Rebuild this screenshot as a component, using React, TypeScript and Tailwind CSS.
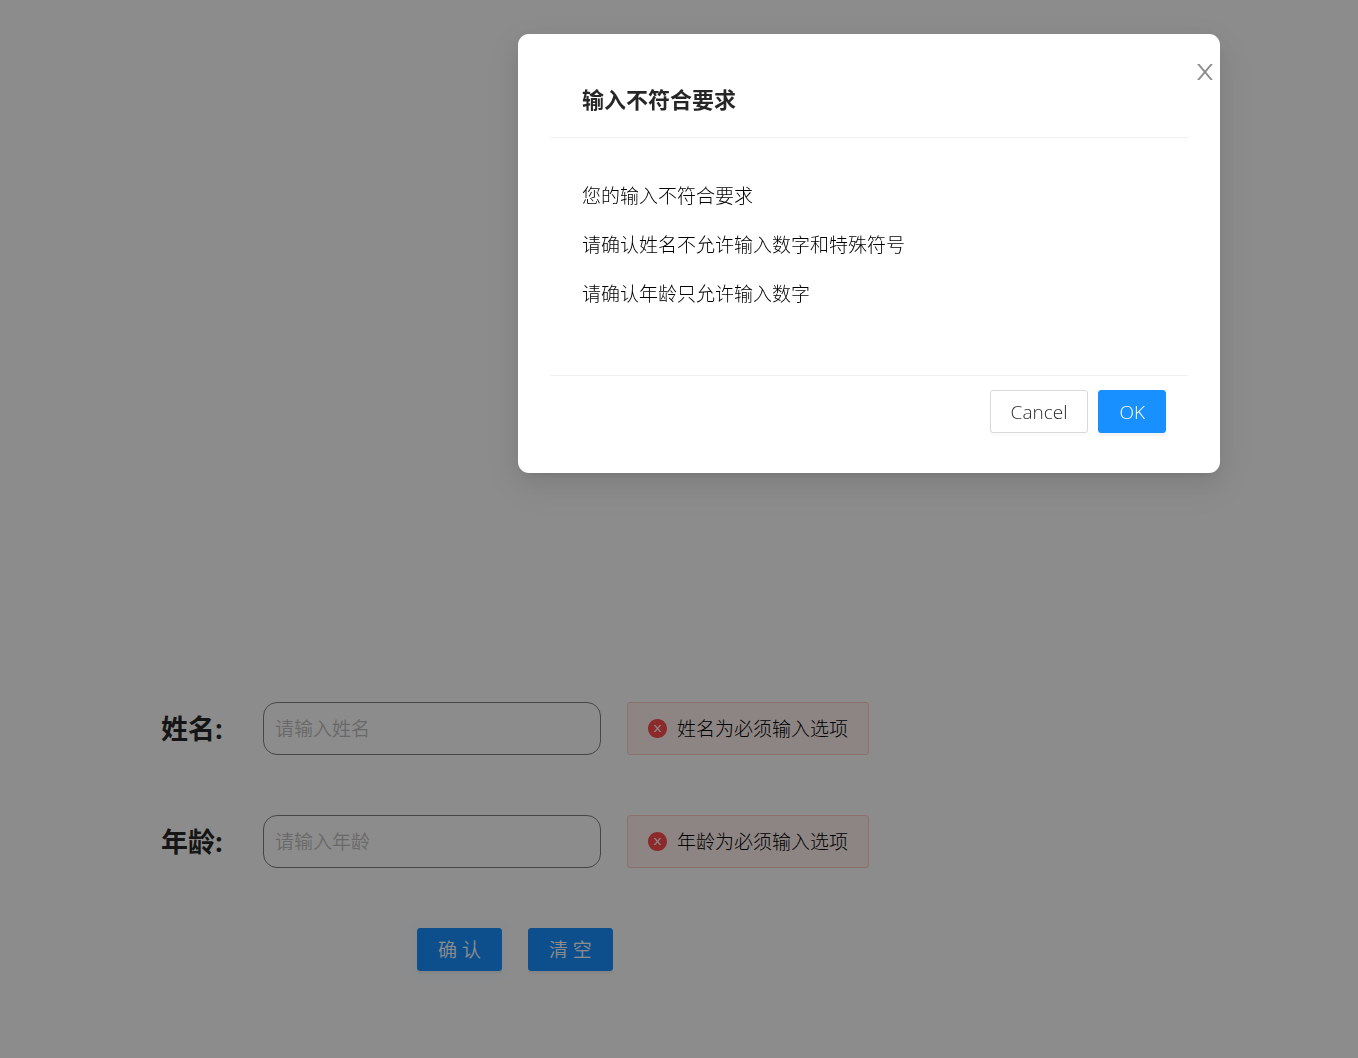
import React from "react";

function CloseIcon() {
  return (
    <svg viewBox="64 64 896 896" className="size-[22px]" fill="currentColor" aria-hidden="true">
      <path d="M563.8 512l262.5-312.9c4.4-5.2.7-13.1-6.1-13.1h-79.8c-4.7 0-9.2 2.1-12.3 5.7L511.6 449.8 295.1 191.7c-3-3.6-7.5-5.7-12.3-5.7H203c-6.8 0-10.5 7.9-6.1 13.1L459.4 512 196.9 824.9A7.95 7.95 0 0 0 203 838h79.8c4.7 0 9.2-2.1 12.3-5.7l216.5-258.1 216.5 258.1c3 3.6 7.5 5.7 12.3 5.7h79.8c6.8 0 10.5-7.9 6.1-13.1L563.8 512z" />
    </svg>
  );
}

function ErrorIcon() {
  return (
    <svg viewBox="64 64 896 896" className="size-[19px] shrink-0 text-[#ff4d4f]" fill="currentColor" aria-hidden="true">
      <path d="M512 64C264.6 64 64 264.6 64 512s200.6 448 448 448 448-200.6 448-448S759.4 64 512 64zm165.4 618.2l-66-.3L512 563.4l-99.3 118.4-66.1.3c-4.4 0-8-3.5-8-8 0-1.9.7-3.7 1.9-5.2l130.1-155L340.5 359a8.32 8.32 0 0 1-1.9-5.2c0-4.4 3.6-8 8-8l66.1.3L512 464.6l99.3-118.4 66-.3c4.4 0 8 3.5 8 8 0 1.9-.7 3.7-1.9 5.2L553.5 514l130 155c1.2 1.5 1.9 3.3 1.9 5.2 0 4.4-3.6 8-8 8z" />
    </svg>
  );
}

interface FieldProps {
  id: string;
  label: string;
  placeholder: string;
  error: string;
}

function Field({ id, label, placeholder, error }: FieldProps) {
  return (
    <div className="flex items-center">
      <label htmlFor={id} className="w-[102px] text-[27px] leading-10 font-bold">
        {label}:
      </label>
      <input
        id={id}
        type="text"
        placeholder={placeholder}
        className="h-[53px] w-[338px] rounded-[14px] border border-[#808080] bg-white px-[11px] placeholder:text-[#bfbfbf]"
      />
      <div role="alert" className="ml-[26px] flex h-[53px] items-center gap-[10px] rounded-[3px] border border-[#ffccc7] bg-[#fff2f0] px-5">
        <ErrorIcon />
        <span className="font-light whitespace-nowrap text-black">{error}</span>
      </div>
    </div>
  );
}

const primary =
  "h-[43px] rounded-[3px] border border-[#1890ff] bg-[#1890ff] px-5 text-white";

export default function App() {
  return (
    <div className="min-h-screen bg-white font-['Open_Sans','Noto_Sans_CJK_SC',sans-serif] text-[19px] leading-[30px] font-[350] text-black/85">
      <main className="pt-[702px] pl-[161px]">
        <form className="flex flex-col gap-[60px]" onSubmit={(e) => e.preventDefault()}>
          <Field id="name" label="姓名" placeholder="请输入姓名" error="姓名为必须输入选项" />
          <Field id="age" label="年龄" placeholder="请输入年龄" error="年龄为必须输入选项" />
          <div className="flex gap-[26px] pl-64">
            <button type="submit" className={`${primary} shadow-[0_3px_0_rgba(0,0,0,0.045),0_0_0_8px_rgba(24,144,255,0.02)]`}>
              确 认
            </button>
            <button type="reset" className={`${primary} shadow-[0_3px_0_rgba(0,0,0,0.045)]`}>
              清 空
            </button>
          </div>
        </form>
      </main>

      <div className="fixed inset-0 flex items-start justify-end bg-black/45 pt-[34px] pr-[138px]">
        <section
          role="dialog"
          aria-modal="true"
          aria-labelledby="dialog-title"
          className="relative w-[702px] rounded-[11px] bg-white px-8 pt-[30px] pb-[26px] shadow-[0_4px_8px_-5px_rgba(0,0,0,0.12),0_8px_22px_rgba(0,0,0,0.08),0_12px_38px_11px_rgba(0,0,0,0.05)]"
        >
          <button type="button" aria-label="Close" className="absolute top-[27px] right-1 text-black/45">
            <CloseIcon />
          </button>
          <header className="border-b border-[#f0f0f0] px-8 pt-5 pb-[23px]">
            <h2 id="dialog-title" className="text-[22px] leading-[30px] font-bold">
              输入不符合要求
            </h2>
          </header>
          <div className="flex flex-col gap-[19px] px-8 pt-[43px] pb-[66px] font-light text-black">
            <p>您的输入不符合要求</p>
            <p>请确认姓名不允许输入数字和特殊符号</p>
            <p>请确认年龄只允许输入数字</p>
          </div>
          <footer className="flex justify-end gap-[10px] border-t border-[#f0f0f0] px-[22px] py-[14px]">
            <button type="button" className="h-[43px] rounded-[3px] border border-[#d9d9d9] bg-white px-5 shadow-[0_3px_0_rgba(0,0,0,0.016)]">
              Cancel
            </button>
            <button type="button" className={`${primary} shadow-[0_3px_0_rgba(0,0,0,0.045)]`}>
              OK
            </button>
          </footer>
        </section>
      </div>
    </div>
  );
}
